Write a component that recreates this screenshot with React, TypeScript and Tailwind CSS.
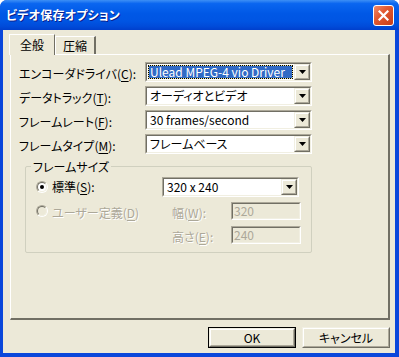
import React from 'react';

const sunkenOuter = 'border border-t-[#ACA899] border-l-[#ACA899] border-b-white border-r-white';
const sunkenInner = 'border border-t-[#716F64] border-l-[#716F64] border-b-[#F1EFE2] border-r-[#F1EFE2]';
const raisedOuter = 'border border-t-[#F1EFE2] border-l-[#F1EFE2] border-b-[#716F64] border-r-[#716F64]';
const raisedInner = 'border border-t-white border-l-white border-b-[#ACA899] border-r-[#ACA899]';
const disabledText = 'text-[#ACA899] [text-shadow:1px_1px_0_#fff]';

function DropButton() {
  return (
    <div className={`w-[16px] h-full ${raisedOuter}`}>
      <div className={`w-full h-full ${raisedInner} bg-[#ECE9D8] flex items-center justify-center`}>
        <svg width="7" height="4" viewBox="0 0 7 4">
          <path d="M0 0h7L3.5 4z" fill="#000" />
        </svg>
      </div>
    </div>
  );
}

function Combo({ value, width, selected }: { value: string; width: string; selected?: boolean }) {
  return (
    <div className={`flex h-[20px] ${width} ${sunkenOuter}`}>
      <div className={`flex flex-1 min-w-0 ${sunkenInner} bg-white`}>
        <div className="flex-1 min-w-0 flex p-[1px]">
          {selected ? (
            <div className="flex-1 border border-dotted border-black bg-[#F3E9A0]">
              <div className="h-full bg-[#316AC5] text-white flex items-center pl-[1px] text-[12px] leading-none whitespace-nowrap">
                {value}
              </div>
            </div>
          ) : (
            <div className="flex-1 flex items-center pl-[2px] text-[12px] leading-none text-black whitespace-nowrap">
              {value}
            </div>
          )}
        </div>
        <DropButton />
      </div>
    </div>
  );
}

function TextBox({ value }: { value: string }) {
  return (
    <div className={`w-[70px] h-[18px] ${sunkenOuter}`}>
      <div className={`w-full h-full ${sunkenInner} bg-[#ECE9D8] flex items-center pl-[1px] text-[12px] leading-none text-[#ACA899]`}>
        {value}
      </div>
    </div>
  );
}

function Radio({ checked, disabled }: { checked?: boolean; disabled?: boolean }) {
  return (
    <div className={`w-[12px] h-[12px] rounded-full shrink-0 ${sunkenOuter}`}>
      <div
        className={`w-full h-full rounded-full ${sunkenInner} ${disabled ? 'bg-[#ECE9D8]' : 'bg-white'} flex items-center justify-center`}
      >
        {checked && <div className="w-[4px] h-[4px] rounded-full bg-black" />}
      </div>
    </div>
  );
}

function Label({ text, key1, tail }: { text: string; key1: string; tail?: string }) {
  return (
    <span className="text-[12px] leading-none whitespace-nowrap">
      {text}(<span className="underline underline-offset-[2px]">{key1}</span>){tail}
    </span>
  );
}

function Button({ children, isDefault }: { children: React.ReactNode; isDefault?: boolean }) {
  return (
    <div className={`w-[88px] h-[21px] ${isDefault ? 'border border-black' : ''}`}>
      <div className={`w-full h-full ${raisedOuter}`}>
        <div className={`w-full h-full ${raisedInner} bg-[#ECE9D8] flex items-center justify-center text-[12px] leading-none text-black`}>
          {children}
        </div>
      </div>
    </div>
  );
}

export default function App() {
  const rows = [
    { text: 'エンコーダドライバ', k: 'C', value: 'Ulead MPEG-4 vio Driver', selected: true },
    { text: 'データトラック', k: 'T', value: 'オーディオとビデオ' },
    { text: 'フレームレート', k: 'F', value: '30 frames/second' },
    { text: 'フレームタイプ', k: 'M', value: 'フレームベース' },
  ];

  return (
    <div className="w-[399px] h-[357px] bg-white font-['Noto_Sans_CJK_JP',sans-serif] [font-feature-settings:'palt'] text-black">
      <div className="w-full h-full flex flex-col rounded-t-[7px] overflow-hidden bg-[#0A47DB]">
        {/* Title bar */}
        <div className="h-[30px] shrink-0 flex items-center justify-between pl-[6px] pr-[5px] bg-[linear-gradient(to_bottom,#3D8FF5_0%,#0A66F0_12%,#0058E6_45%,#0055E3_70%,#004BD9_88%,#003FCC_100%)]">
          <span className="text-white font-bold text-[12px] tracking-[0.2px] leading-none [text-shadow:1px_1px_0_#0A1E8C]">
            ビデオ保存オプション
          </span>
          <div className="w-[21px] h-[21px] rounded-[3px] border border-white bg-[linear-gradient(135deg,#F08A6A_0%,#E25A32_40%,#C83C18_100%)] flex items-center justify-center">
            <svg width="11" height="11" viewBox="0 0 11 11">
              <path d="M1.5 1.5L9.5 9.5M9.5 1.5L1.5 9.5" stroke="#fff" strokeWidth="2.2" strokeLinecap="square" />
            </svg>
          </div>
        </div>

        {/* Client area */}
        <div className="flex-1 flex flex-col ml-[3px] mr-[4px] mb-[4px] bg-[#ECE9D8] pl-[7px] pr-[5px] pt-[4px]">
          {/* Tabs */}
          <div className="h-[20px] flex items-end ml-[-1px] relative z-10">
            <div className="h-[21px] w-[46px] mb-[-1px] bg-[#ECE9D8] border-t border-l border-t-white border-l-white border-r border-r-[#716F64] flex items-center justify-center text-[12px] leading-none">
              全般
            </div>
            <div className="h-[18px] w-[41px] bg-[#ECE9D8] border-t border-l border-t-white border-l-white border-r-2 border-r-[#716F64] flex items-center justify-center text-[12px] leading-none">
              圧縮
            </div>
          </div>

          {/* Panel */}
          <div className="h-[266px] border-t border-l border-t-white border-l-white border-r-2 border-b-2 border-r-[#716F64] border-b-[#716F64] pl-[8px] pt-[7px] flex flex-col">
            <div className="flex flex-col gap-[4px]">
              {rows.map((r) => (
                <div key={r.k} className="flex items-center h-[20px]">
                  <div className="w-[126px]">
                    <Label text={r.text} key1={r.k} tail=":" />
                  </div>
                  <Combo value={r.value} width="w-[167px]" selected={r.selected} />
                </div>
              ))}
            </div>

            {/* Frame size group */}
            <div className="relative mt-[12px] ml-[6px] w-[287px] border border-[#D0D0BF] rounded-[2px] pt-[10px] pb-[8px] pl-[10px]">
              <span className="absolute left-[5px] top-[-8px] px-[2px] bg-[#ECE9D8] text-[12px] leading-[15px]">
                フレームサイズ
              </span>
              <div className="flex items-center h-[20px]">
                <div className="w-[126px] flex items-center gap-[4px]">
                  <Radio checked />
                  <Label text="標準" key1="S" tail=":" />
                </div>
                <Combo value="320 x 240" width="w-[137px]" />
              </div>
              <div className="flex items-center h-[18px] mt-[5px]">
                <div className="w-[136px] flex items-center gap-[4px]">
                  <Radio disabled />
                  <span className={disabledText}>
                    <Label text="ユーザー定義" key1="D" />
                  </span>
                </div>
                <div className={`w-[59px] ${disabledText}`}>
                  <Label text="幅" key1="W" tail=":" />
                </div>
                <TextBox value="320" />
              </div>
              <div className="flex items-center h-[18px] mt-[6px]">
                <div className="w-[136px]" />
                <div className={`w-[59px] ${disabledText}`}>
                  <Label text="高さ" key1="E" tail=":" />
                </div>
                <TextBox value="240" />
              </div>
            </div>
          </div>

          {/* Buttons */}
          <div className="flex justify-end gap-[6px] mt-[7px]">
            <Button isDefault>OK</Button>
            <Button>キャンセル</Button>
          </div>
        </div>
      </div>
    </div>
  );
}
